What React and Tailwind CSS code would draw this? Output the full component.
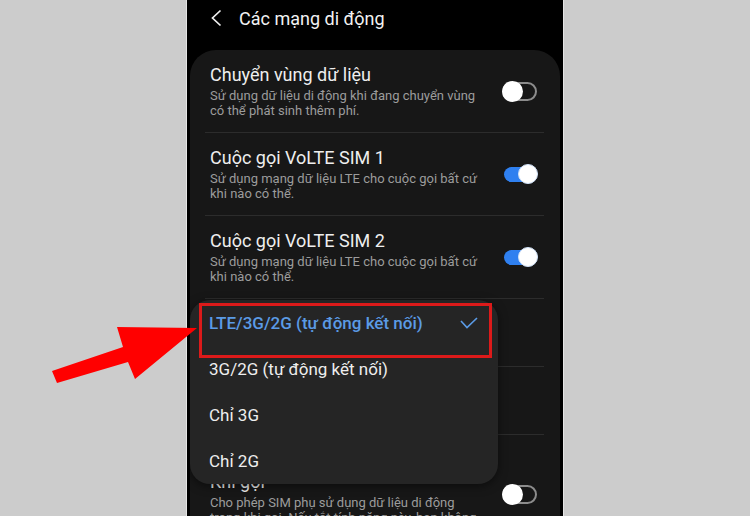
import React from 'react';

const font = { fontFamily: 'Roboto, "Noto Sans", sans-serif' };

const Toggle = ({ on }) =>
  on ? (
    <div className="relative w-[36px] h-[21px] shrink-0">
      <div className="absolute left-[2px] top-[3px] w-[33px] h-[15px] rounded-full bg-[#2f80f0]" />
      <div className="absolute right-0 top-0 w-[20px] h-[20px] rounded-full bg-white border border-[#cfe0f7]" />
    </div>
  ) : (
    <div className="relative w-[35px] h-[21px] mr-[1px] shrink-0">
      <div className="absolute left-0 top-[1px] w-[35px] h-[19px] rounded-full border-2 border-[#8c8c8c]" />
      <div className="absolute left-0 top-0 w-[21px] h-[21px] rounded-full bg-white" />
    </div>
  );

const Divider = () => <div className="ml-[15px] mr-[16px] h-px bg-[#2c2c2c]" />;

const Item = ({ title, lines, on, blue }) => (
  <div className="flex items-center justify-between pl-[20px] pr-[22px] pt-[14px] pb-[14px]">
    <div>
      {title.map((t, i) => (
        <div key={i} className="text-[18px] leading-[22px] text-[#eeeeee]">{t}</div>
      ))}
      <div className="mt-[2px]">
        {lines.map((l, i) => (
          <div key={i} className={`text-[13px] leading-[15px] ${blue ? 'text-[#5d9de8]' : 'text-[#9c9c9c]'}`}>
            {l}
          </div>
        ))}
      </div>
    </div>
    {on !== undefined && <Toggle on={on} />}
  </div>
);

const options = [
  'LTE/3G/2G (tự động kết nối)',
  '3G/2G (tự động kết nối)',
  'Chỉ 3G',
  'Chỉ 2G',
];

export default function App() {
  return (
    <div className="relative w-[750px] h-[516px] bg-[#cccccc] flex justify-center overflow-hidden" style={font}>
      <div className="relative w-[378px] h-[516px] border-x border-[#e4e4e4] bg-black flex flex-col overflow-hidden">
        {/* header */}
        <div className="h-[50px] shrink-0 flex items-start pt-[8px] pl-[24px]">
          <svg width="12" height="22" viewBox="0 0 12 22">
            <polyline points="9.5,2.5 1.5,10 9.5,17.5" fill="none" stroke="#f0f0f0" strokeWidth="1.7" />
          </svg>
          <div className="ml-[16px] text-[18px] leading-[22px] text-[#f2f2f2]">Các mạng di động</div>
        </div>

        {/* card */}
        <div className="flex-1 mx-[3px] rounded-t-[26px] bg-[#171717]">
          <Item
            title={['Chuyển vùng dữ liệu']}
            lines={['Sử dụng dữ liệu di động khi đang chuyển vùng', 'có thể phát sinh thêm phí.']}
            on={false}
          />
          <Divider />
          <Item
            title={['Cuộc gọi VoLTE SIM 1']}
            lines={['Sử dụng mạng dữ liệu LTE cho cuộc gọi bất cứ', 'khi nào có thể.']}
            on={true}
          />
          <Divider />
          <Item
            title={['Cuộc gọi VoLTE SIM 2']}
            lines={['Sử dụng mạng dữ liệu LTE cho cuộc gọi bất cứ', 'khi nào có thể.']}
            on={true}
          />
          <Divider />
          <Item title={['Chế độ mạng SIM 1']} lines={['LTE/3G/2G (tự động kết nối)']} blue />
          <Divider />
          <Item title={['Chế độ mạng SIM 2']} lines={['3G/2G (tự động kết nối)']} blue />
          <Divider />
          <Item
            title={['Chuyển dữ liệu di động', 'Khi gọi']}
            lines={[
              'Cho phép SIM phụ sử dụng dữ liệu di động',
              'trong khi gọi. Nếu tắt tính năng này, bạn không',
              'thể dùng dữ liệu khi gọi.',
            ]}
            on={false}
          />
        </div>

        {/* dropdown popup */}
        <div className="absolute left-[3px] top-[300px] w-[308px] rounded-[20px] bg-[#252525] shadow-[0_2px_10px_rgba(0,0,0,0.5)]">
          {options.map((o, i) => (
            <div key={o} className="h-[46px] flex items-center justify-between pl-[19px] pr-[20px]">
              <span className={`text-[17px] leading-[22px] ${i === 0 ? 'text-[#5b9be6] font-medium' : 'text-[#eeeeee]'}`}>
                {o}
              </span>
              {i === 0 && (
                <svg width="18" height="12" viewBox="0 0 18 12">
                  <polyline points="1,4 7,10.5 17,1" fill="none" stroke="#5b9be6" strokeWidth="1.6" />
                </svg>
              )}
            </div>
          ))}
        </div>
      </div>

      {/* highlight box */}
      <div className="absolute left-[199px] top-[303px] w-[293px] h-[55px] border-[3px] border-[#dc1a1a]" />

      {/* arrow */}
      <svg className="absolute left-0 top-0 pointer-events-none" width="750" height="516" viewBox="0 0 750 516">
        <polygon
          points="197,328 117,327 123,347 52,371 57,383 128,362 135,379"
          fill="#ff0000"
        />
      </svg>
    </div>
  );
}
